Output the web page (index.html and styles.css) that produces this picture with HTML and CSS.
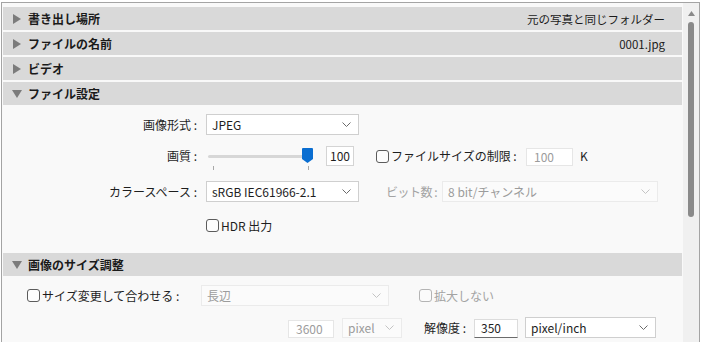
FILE: index.html
```html
<!DOCTYPE html>
<html lang="ja">
<head>
<meta charset="utf-8">
<link rel="stylesheet" href="styles.css">
</head>
<body>
<div class="frame">
  <div class="content">
    <div class="hdr">
      <svg class="tri" width="8" height="10" viewBox="0 0 8 10"><path d="M0 0 L8 5 L0 10 Z"/></svg>
      <span class="ht">書き出し場所</span>
      <span class="hv">元の写真と同じフォルダー</span>
    </div>
    <div class="hdr">
      <svg class="tri" width="8" height="10" viewBox="0 0 8 10"><path d="M0 0 L8 5 L0 10 Z"/></svg>
      <span class="ht">ファイルの名前</span>
      <span class="hv">0001.jpg</span>
    </div>
    <div class="hdr">
      <svg class="tri" width="8" height="10" viewBox="0 0 8 10"><path d="M0 0 L8 5 L0 10 Z"/></svg>
      <span class="ht">ビデオ</span>
    </div>
    <div class="hdr">
      <svg class="tri down" width="10" height="8" viewBox="0 0 10 8"><path d="M0 0 L10 0 L5 8 Z"/></svg>
      <span class="ht">ファイル設定</span>
    </div>
    <div class="sec sec1">
      <div class="row r1">
        <span class="lbl">画像形式 :</span>
        <div class="sel w153"><span>JPEG</span><svg class="chev" width="9" height="5" viewBox="0 0 9 5"><path d="M0.5 0.5 L4.5 4.5 L8.5 0.5"/></svg></div>
      </div>
      <div class="row r2">
        <span class="lbl lbl2">画質 :</span>
        <svg class="slider" width="112" height="26" viewBox="0 0 112 26">
          <rect x="3" y="10" width="99" height="3" rx="1.5" fill="#d7d7d7"/>
          <rect x="8" y="21" width="1" height="4" fill="#a8a8a8"/>
          <rect x="103" y="21" width="1" height="4" fill="#a8a8a8"/>
          <path d="M97 4 Q97 3 98 3 H107 Q108 3 108 4 V14 L102.5 18 L97 14 Z" fill="#0a6ed1"/>
        </svg>
        <div class="num">100</div>
        <span class="cb cb2"></span>
        <span class="cbt fsl">ファイルサイズの制限 :</span>
        <div class="inp dis w47">100</div>
        <span class="k">K</span>
      </div>
      <div class="row r3">
        <span class="lbl">カラースペース :</span>
        <div class="sel w153"><span>sRGB IEC61966-2.1</span><svg class="chev" width="9" height="5" viewBox="0 0 9 5"><path d="M0.5 0.5 L4.5 4.5 L8.5 0.5"/></svg></div>
        <span class="bit">ビット数 :</span>
        <div class="sel dis w216"><span>8 bit/チャンネル</span><svg class="chev" width="9" height="5" viewBox="0 0 9 5"><path d="M0.5 0.5 L4.5 4.5 L8.5 0.5"/></svg></div>
      </div>
      <div class="row r4">
        <span class="lbl"></span>
        <span class="cb"></span>
        <span class="cbt">HDR 出力</span>
      </div>
    </div>
    <div class="hdr">
      <svg class="tri down" width="10" height="8" viewBox="0 0 10 8"><path d="M0 0 L10 0 L5 8 Z"/></svg>
      <span class="ht">画像のサイズ調整</span>
    </div>
    <div class="sec sec2">
      <div class="row s1">
        <div class="fitlbl"><span class="cb"></span><span class="cbt">サイズ変更して合わせる :</span></div>
        <div class="sel dis w188"><span>長辺</span><svg class="chev" width="9" height="5" viewBox="0 0 9 5"><path d="M0.5 0.5 L4.5 4.5 L8.5 0.5"/></svg></div>
        <span class="cb cbdis cbx"></span>
        <span class="cbt distext">拡大しない</span>
      </div>
      <div class="row s2">
        <div class="inp dis w46">3600</div>
        <div class="sel dis w60"><span>pixel</span><svg class="chev" width="9" height="5" viewBox="0 0 9 5"><path d="M0.5 0.5 L4.5 4.5 L8.5 0.5"/></svg></div>
        <span class="res">解像度 :</span>
        <div class="inp act w44">350</div>
        <div class="sel w131"><span>pixel/inch</span><svg class="chev" width="9" height="5" viewBox="0 0 9 5"><path d="M0.5 0.5 L4.5 4.5 L8.5 0.5"/></svg></div>
      </div>
    </div>
  </div>
  <div class="scroll">
    <svg class="up" width="7" height="5" viewBox="0 0 7 5"><path d="M0 5 L3.5 0 L7 5 Z"/></svg>
    <div class="thumb"></div>
  </div>
</div>
</body>
</html>
```

FILE: styles.css
```css
html, body {
  margin: 0;
  padding: 0;
}
body {
  background: #ffffff;
  font-family: "Noto Sans CJK JP", "Noto Sans", sans-serif;
  font-size: 12px;
  color: #1e1e1e;
  height: 342px;
  overflow: hidden;
}
.frame {
  margin: 2px 0 0 1px;
  width: 697px;
  height: 345px;
  border: 1px solid #a4a4a4;
  border-bottom: none;
  display: flex;
  background: #f9f9f9;
}
.content {
  width: 681px;
  box-sizing: border-box;
  padding: 4px 1px 0 1px;
}
.hdr {
  height: 23px;
  margin-bottom: 2px;
  background: #d9d9d9;
  display: flex;
  align-items: center;
  padding-left: 10px;
  font-weight: bold;
  font-size: 12px;
  color: #1a1a1a;
}
.tri {
  fill: #7b7b7b;
  margin-right: 7px;
  flex: none;
}
.tri.down {
  margin-left: -1px;
  margin-right: 6px;
}
.hv {
  margin-left: auto;
  padding-right: 17px;
  font-weight: normal;
  font-size: 11.5px;
}
.row {
  display: flex;
  align-items: center;
}
.sec1 {
  height: 139px;
}
.lbl {
  width: 194px;
  text-align: right;
  margin-right: 9px;
  flex: none;
  white-space: nowrap;
}
.r1 {
  margin-top: 9px;
  height: 21px;
}
.r2 {
  margin-top: 10px;
  height: 26px;
  align-items: flex-start;
}
.r2 .lbl2 {
  line-height: 20px;
  margin-top: 1px;
  margin-right: 8px;
}
.r3 {
  margin-top: 10px;
  height: 21px;
}
.r4 {
  margin-top: 16px;
  height: 14px;
}
.sel {
  height: 21px;
  box-sizing: border-box;
  border: 1px solid #cfcfcf;
  background: #ffffff;
  display: flex;
  align-items: center;
  padding: 0 7px 0 5px;
  flex: none;
}
.sel span {
  flex: 1;
  white-space: nowrap;
}
.chev {
  fill: none;
  stroke: #6a6a6a;
  stroke-width: 1;
}
.sel.dis {
  border-color: #ebebeb;
  background: #fbfbfb;
  color: #9c9c9c;
}
.sel.dis .chev {
  stroke: #c4c4c4;
}
.w153 { width: 153px; }
.w216 { width: 216px; }
.w188 { width: 188px; }
.w60 { width: 60px; height: 20px; }
.w131 { width: 131px; }
.slider {
  flex: none;
}
.num {
  margin-left: 9px;
  margin-top: 1px;
  width: 28px;
  height: 20px;
  box-sizing: border-box;
  border: 1px solid #d4d4d4;
  background: #ffffff;
  text-align: center;
  line-height: 18px;
  flex: none;
}
.cb {
  width: 13px;
  height: 13px;
  box-sizing: border-box;
  border: 1px solid #5c5c5c;
  border-radius: 3px;
  background: #fdfdfd;
  flex: none;
}
.cb2 {
  margin-left: 22px;
  margin-top: 5px;
}
.cbt {
  margin-left: 2px;
  white-space: nowrap;
}
.fsl {
  width: 135px;
  line-height: 20px;
  margin-top: 1px;
}
.inp {
  height: 18px;
  box-sizing: border-box;
  border: 1px solid #e6e6e6;
  background: #ffffff;
  padding-left: 7px;
  line-height: 16px;
  flex: none;
}
.inp.dis {
  color: #9c9c9c;
}
.r2 .inp {
  margin-top: 3px;
}
.w47 { width: 47px; }
.w46 { width: 46px; }
.w44 { width: 44px; }
.k {
  margin-left: 7px;
  line-height: 20px;
  margin-top: 1px;
}
.bit {
  margin-left: 27px;
  margin-right: 5px;
  color: #a3a3a3;
  white-space: nowrap;
  flex: none;
  letter-spacing: -0.5px;
}
.sec2 {
  padding-left: 24px;
}
.s1 {
  margin-top: 9px;
  height: 21px;
}
.fitlbl {
  width: 174px;
  display: flex;
  align-items: center;
  flex: none;
}
.cbdis {
  border-color: #b4b4b4;
  background: #fbfbfb;
}
.cbx {
  margin-left: 30px;
}
.distext {
  color: #a3a3a3;
}
.s2 {
  margin-top: 11px;
  height: 21px;
  padding-left: 261px;
}
.s2 .inp.dis {
  margin-top: 2px;
}
.s2 .sel.dis {
  margin-left: 8px;
}
.res {
  margin-left: 22px;
  width: 50px;
  white-space: nowrap;
  flex: none;
}
.inp.act {
  border-color: #dcdcdc;
  border-bottom: 1px solid #6b6b6b;
  margin-top: 2px;
  height: 19px;
  padding-left: 6px;
}
.s2 .w131 {
  margin-left: 7px;
}
.scroll {
  width: 16px;
  background: #f0f0f0;
  display: flex;
  flex-direction: column;
  align-items: center;
}
.up {
  margin-top: 8px;
  fill: #8a8a8a;
}
.thumb {
  margin-top: 6px;
  width: 6px;
  height: 195px;
  border-radius: 3px;
  background: #8a8a8a;
}
```
